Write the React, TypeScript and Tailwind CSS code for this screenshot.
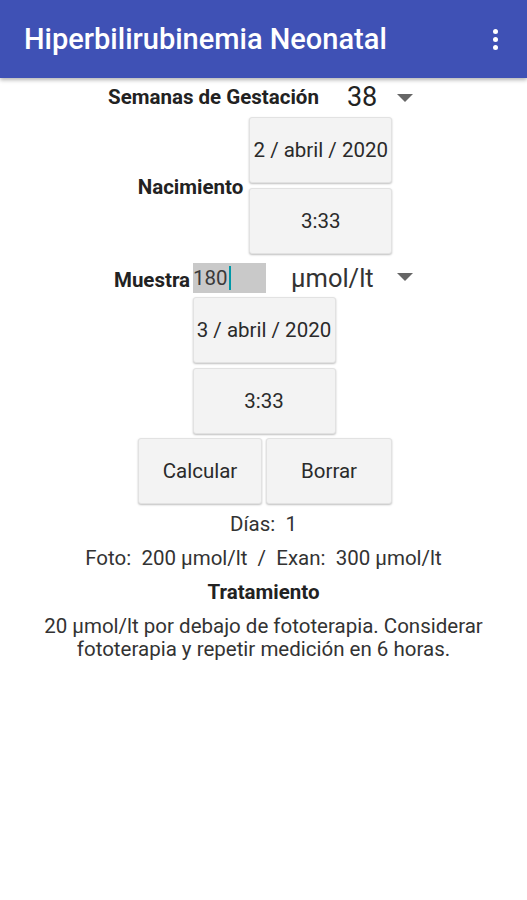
import React from "react";

const font = { fontFamily: "Roboto, 'Noto Sans', sans-serif" };

const Btn = ({ children, className = "" }: { children: React.ReactNode; className?: string }) => (
  <button
    className={`h-[66px] rounded-[3px] bg-[#f3f3f3] border border-[#e2e2e2] shadow-[0_1px_2px_rgba(0,0,0,0.25)] text-[20.5px] text-[#2a2a2a] ${className}`}
  >
    {children}
  </button>
);

const Caret = () => (
  <svg width="16" height="8" viewBox="0 0 16 8" className="fill-[#666]">
    <path d="M0 0h16L8 8z" />
  </svg>
);

export default function App() {
  return (
    <div className="w-[527px] h-[900px] bg-white" style={font}>
      {/* Toolbar */}
      <div className="h-[78px] bg-[#3f51b5] flex items-center justify-between pl-6 pr-[29px] shadow-[0_2px_4px_rgba(0,0,0,0.3)] relative z-10">
        <h1 className="text-white text-[29px] font-medium leading-none">Hiperbilirubinemia Neonatal</h1>
        <div className="flex flex-col gap-[3px]">
          <span className="w-[5px] h-[5px] rounded-full bg-white" />
          <span className="w-[5px] h-[5px] rounded-full bg-white" />
          <span className="w-[5px] h-[5px] rounded-full bg-white" />
        </div>
      </div>

      <div className="flex flex-col items-center text-[#222]">
        {/* Semanas */}
        <div className="flex items-center h-[39px] pr-[6px]">
          <span className="font-bold text-[20.5px]">Semanas de Gestación</span>
          <span className="text-[27px] ml-[28px] w-[50px] leading-none">38</span>
          <Caret />
        </div>

        {/* Nacimiento */}
        <div className="flex items-center gap-[6px] ml-[3px]">
          <span className="font-bold text-[20.5px] mt-[3px]">Nacimiento</span>
          <div className="flex flex-col gap-[5px]">
            <Btn className="w-[143px]">2 / abril / 2020</Btn>
            <Btn className="w-[143px]">3:33</Btn>
          </div>
        </div>

        {/* Muestra */}
        <div className="flex items-center h-[30px] mt-[9px] mb-[4px]">
          <span className="font-bold text-[20.5px] mt-[4px]">Muestra</span>
          <div className="ml-[3px] w-[73px] h-[30px] bg-[#c9c9c9] flex items-center text-[20.5px] text-[#3a3a3a]">
            180
            <span className="w-[2px] h-[24px] bg-[#0097a7] ml-[1px]" />
          </div>
          <span className="text-[25.5px] text-[#333] ml-[25px] w-[106px]">µmol/lt</span>
          <span className="mt-[-2px]"><Caret /></span>
        </div>

        <div className="flex flex-col gap-[5px] ml-[1px]">
          <Btn className="w-[143px]">3 / abril / 2020</Btn>
          <Btn className="w-[143px]">3:33</Btn>
        </div>

        <div className="flex gap-[4px] mt-[4px] ml-[3px]">
          <Btn className="w-[124px]">Calcular</Btn>
          <Btn className="w-[126px]">Borrar</Btn>
        </div>

        <p className="text-[20.5px] leading-[24px] text-[#333] mt-[8px]">Días:&nbsp; 1</p>
        <p className="text-[20.5px] leading-[24px] text-[#333] mt-[10px]">Foto:&nbsp; 200 µmol/lt&nbsp; /&nbsp; Exan:&nbsp; 300 µmol/lt</p>
        <p className="text-[20.5px] leading-[24px] font-bold mt-[10px]">Tratamiento</p>
        <p className="text-[20.5px] text-[#333] text-center leading-[23px] mt-[11px]">
          20 µmol/lt por debajo de fototerapia. Considerar
          <br />
          fototerapia y repetir medición en 6 horas.
        </p>
      </div>
    </div>
  );
}
